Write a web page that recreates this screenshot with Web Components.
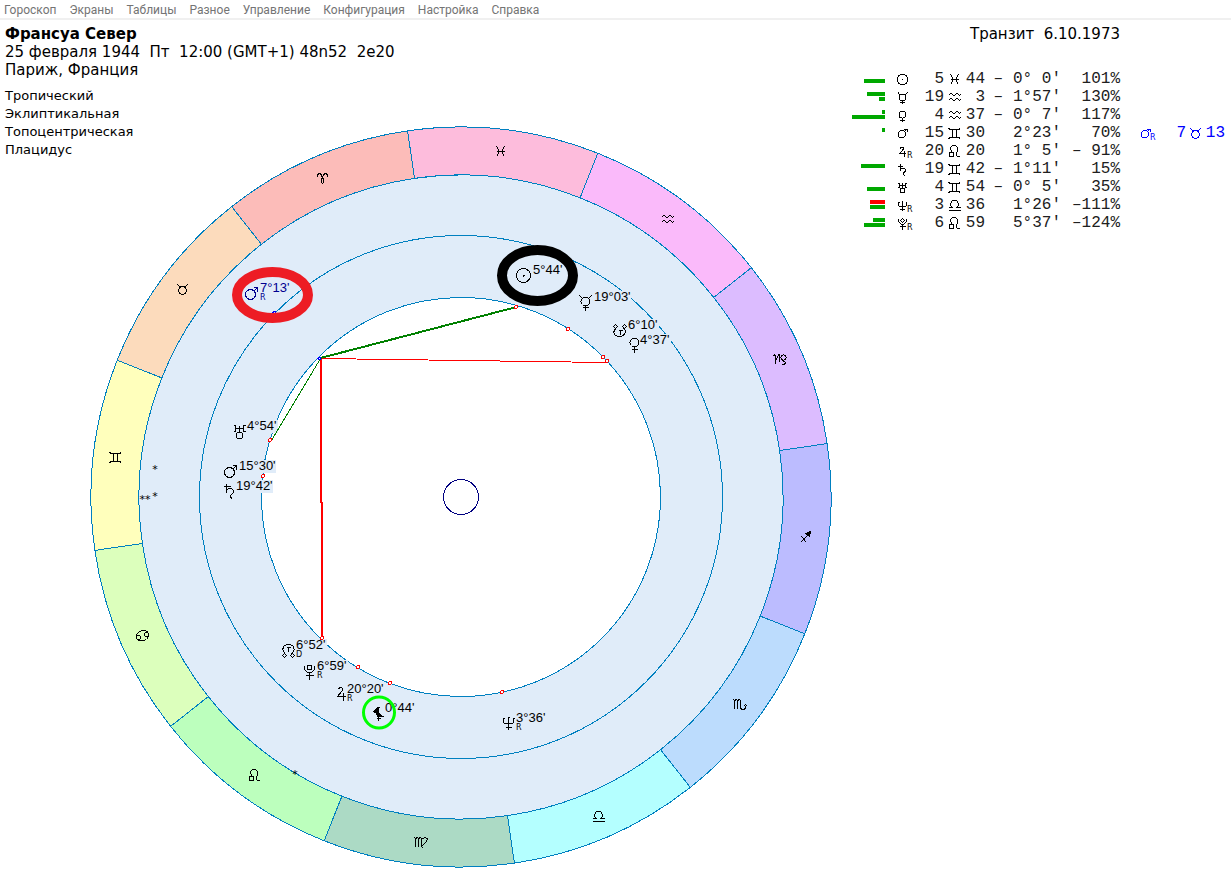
<!DOCTYPE html>
<html lang="ru">
<head>
<meta charset="utf-8">
<title>Франсуа Север</title>
<style>
  body { margin: 0; background: #fff; color: #000; font-family: "DejaVu Sans", Verdana, sans-serif; }
</style>
</head>
<body>
<astro-app>
  <app-menu slot="menu">
    <menu-item>Гороскоп</menu-item>
    <menu-item>Экраны</menu-item>
    <menu-item>Таблицы</menu-item>
    <menu-item>Разное</menu-item>
    <menu-item>Управление</menu-item>
    <menu-item>Конфигурация</menu-item>
    <menu-item>Настройка</menu-item>
    <menu-item>Справка</menu-item>
  </app-menu>
  <chart-info slot="info">
    <span slot="name">Франсуа Север</span>
    <span slot="date">25 февраля 1944  Пт  12:00 (GMT+1) 48n52  2e20</span>
    <span slot="place">Париж, Франция</span>
    <li>Тропический</li>
    <li>Эклиптикальная</li>
    <li>Топоцентрическая</li>
    <li>Плацидус</li>
  </chart-info>
  <zodiac-wheel slot="wheel"></zodiac-wheel>
  <transit-table slot="transit">Транзит  6.10.1973</transit-table>
</astro-app>

<script>
// Glyph outlines, drawn around (0,0) with one-pixel strokes.
const ring = (x, y, r) => `<circle cx="${x}" cy="${y}" r="${r}"/>`;
const line = d => `<path d="${d}"/>`;
const GLYPHS = {
  sun: ring(0, 0, 7) + line('M-1 0H1M0-1V1'),
  mercury: ring(0, 0, 4.5) + line('M-6-7V-6L-3-3M6-7V-6L3-3M0 4V9M-3 6H3'),
  venus: ring(0, -1, 4.5) + line('M0 3V9M-3 6H3'),
  mars: ring(-1, 1, 5) + line('M2-2L6-6M2-6H6V-2'),
  jupiter: line('M-3-4L-2-6H0L1-5V-3L-4 3H4M2-1V7'),
  saturn: line('M-3-7V2M-6-4H1M-3 0L-1-2H2L4 0V2L1 5V7L3 8'),
  uranus: line('M-6-6H-4V0H-6M6-6H4V0H6M-4-3H4M0-6V1') + ring(0, 4, 3.2),
  neptune: line('M-5-5V0L-4 1H4L5 0V-5M-6-4H-4M4-4H6M0-6V7M-3 5H3M-1-5H1'),
  pluto: ring(0, -4, 2.3) + line('M-5-6V-2L-2 1H2L5-2V-6M0 1V8M-4 4H4'),
  south: ring(-4, -4, 1.8) + ring(5, -4, 1.8) + line('M-3-2C-8 1-5 6 0 6S8 1 4-2M-1 0H3M1 0V4'),
  north: ring(-4, 5, 1.8) + ring(4, 5, 1.8) + line('M-3 3C-8-1-5-6 0-6S8-1 3 3M-2-3H2M0-3V1'),
  lilith: '<path fill="currentColor" stroke="none" d="M4-6H0L-3-4L-6-1L-3 1L-1 4H5L2 2L0 0V-3L1-5Z"/>' + line('M0 3V8M-2 6H2'),
  aries: line('M-5-2V-4L-3-5H-2L0-1L1-4L3-5L5-4V-2M-1-1V4L0 5L1 4V-1'),
  taurus: ring(0, 1, 3.8) + line('M-5-5L-3-3H3L5-5'),
  gemini: line('M-6-5L-4-4H4L6-5M-6 5L-4 4H4L6 5M-2-4V4M2-4V4'),
  cancer: ring(-4, 2, 2) + ring(4, -1, 2) + line('M-6 1V-1L-3-4L0-5H3L6-3M6 0V1L4 4L1 5H-3L-5 4'),
  leo: ring(-3, 3, 2.3) + line('M-2 1L-4-2V-4L-2-6H1L3-4V-1L2 2V4L3 5H5'),
  virgo: line('M-7-5L-6-4V4M-6-4L-4-5L-3-4V4M-3-4L-1-5L0-4V4L2 6M0-3L3-5L6-4L5-1L-1 5'),
  libra: line('M-6 5H6M-6 2H-2L-4 0V-2L-2-5H2L4-2V0L2 2H6'),
  scorpio: line('M-7-5L-6-4V4M-6-4L-4-5L-3-4V4M-3-4L-1-5L0-4V4L2 5H4L5 3V1M3 2L5 0L7 2'),
  sagittarius: line('M-5 5L4-4M-5-1H-4L1 5') + '<path fill="currentColor" d="M0-4L5-6L4-1Z"/>',
  capricorn: line('M-7-3L-6-5L-5-4V4M-5 2L-2-5H-1V2') + ring(3, -2, 2.6) + line('M2 1L5 3L4 5H1'),
  aquarius: line('M-6-2L-4-4H-3L-1-2H0L2-4H3L5-2L6-3M-6 3L-4 1H-3L-1 3H0L2 1H3L5 3L6 2'),
  pisces: line('M-4-5L-2-2V2L-4 5M4-5L2-2V2L4 5M-4 0H4')
};

function define(name, html, setup) {
  const template = document.createElement('template');
  template.innerHTML = html;
  customElements.define(name, class extends HTMLElement {
    constructor() {
      super();
      const root = this.attachShadow({ mode: 'open' });
      root.append(template.content.cloneNode(true));
      if (setup) setup(root, this);
    }
  });
}

define('astro-app', `
  <style>
    :host { display: block; }
    main { display: grid; grid-template-columns: minmax(0, 1fr) auto; align-items: start; }
    .info { grid-area: 1 / 1; z-index: 1; padding: 5px 0 0 5px; justify-self: start; }
    .wheel { grid-area: 1 / 1; padding: 106px 16px 9px 90px; }
    .transit { grid-area: 1 / 2; padding-top: 5px; }
  </style>
  <slot name="menu"></slot>
  <main>
    <div class="info"><slot name="info"></slot></div>
    <div class="wheel"><slot name="wheel"></slot></div>
    <div class="transit"><slot name="transit"></slot></div>
  </main>`);

define('app-menu', `
  <style>
    :host { display: block; border-bottom: 2px solid #f0f0f0; }
    nav { display: flex; height: 18px; padding-left: 4px; gap: 13px; align-items: flex-end; }
  </style>
  <nav><slot></slot></nav>`);

define('menu-item', `
  <style>
    :host { display: block; }
    button { display: block; margin: 0; padding: 0; border: 0; background: none; color: #747474;
      font: 12px/16px Roboto, "Noto Sans", sans-serif; white-space: nowrap; }
  </style>
  <button type="button"><slot></slot></button>`);

define('chart-info', `
  <style>
    :host { display: block; font-size: 15px; line-height: 18px; }
    h1, p { margin: 0; font-size: 15px; white-space: pre; }
    ul { margin: 8px 0 0; padding: 0; list-style: none; font-size: 13px; }
  </style>
  <h1><slot name="name"></slot></h1>
  <p><slot name="date"></slot></p>
  <p><slot name="place"></slot></p>
  <ul><slot></slot></ul>`);

define('astro-glyph', `
  <style>
    :host { display: block; white-space: normal; }
    svg { display: block; fill: none; stroke: currentColor; shape-rendering: crispEdges; overflow: visible; }
    path, circle { vector-effect: non-scaling-stroke; }
    text { fill: currentColor; stroke: none; font: 8px "DejaVu Sans", sans-serif; }
  </style>
  <svg width="18" height="18" viewBox="-6.5 -9.5 18 18" aria-hidden="true"></svg>`,
  (root, host) => {
    const scale = host.hasAttribute('small') ? 0.75 : 1;
    root.querySelector('svg').innerHTML =
      `<g transform="scale(${scale})">${GLYPHS[host.getAttribute('name')]}</g>` +
      (host.hasAttribute('retro') ? '<text x="4.5" y="6.5">R</text>' : '');
  });

define('zodiac-wheel', `
  <style>
    :host { display: block; }
    svg { display: block; width: 100%; height: auto; fill: none; stroke-width: 1; }
    .crisp { shape-rendering: crispEdges; }
    .edge { stroke: #0080c0; }
    .glyph { stroke: currentColor; }
    .label { font: 13px "Liberation Sans", Arial, sans-serif; fill: currentColor; }
    .mark { font: 8px "DejaVu Sans", sans-serif; fill: currentColor; }
    .star { font: 11px "DejaVu Sans", sans-serif; fill: #000; }
    .retro { color: #000090; }
  </style>
  <svg viewBox="89.5 125.5 742 742" role="img" aria-label="Зодиакальный круг"></svg>`,
  root => {
    const cx = 460.5, cy = 496.5;
    const at = (r, deg) => {
      const a = deg * Math.PI / 180;
      return `${(cx + r * Math.cos(a)).toFixed(2)} ${(cy - r * Math.sin(a)).toFixed(2)}`;
    };
    // Signs run counter-clockwise; each entry: glyph, fill, glyph centre.
    const signs = [
      ['aries', '#fcbcb9', 322, 178], ['taurus', '#fcdbbc', 182, 289], ['gemini', '#ffffbc', 115, 457],
      ['cancer', '#dcffbc', 142, 635], ['leo', '#bcffbd', 254, 775], ['virgo', '#acdac5', 421, 842],
      ['libra', '#b4ffff', 598, 816], ['scorpio', '#bcdcfd', 740, 704], ['sagittarius', '#bcbcff', 805, 537],
      ['capricorn', '#dcbcff', 780, 359], ['aquarius', '#fabafa', 667, 219], ['pisces', '#fdbcdc', 500, 151]
    ];
    // Planet glyph and centre, label with its left edge and baseline, optional motion mark.
    const bodies = [
      ['sun', 523, 275, '5°44\'', 533, 274], ['mercury', 585, 301, '19°03\'', 594, 301],
      ['south', 619, 330, '6°10\'', 628, 329], ['venus', 634, 343, '4°37\'', 640, 344],
      ['mars', 251, 293, '7°13\'', 260, 292, 'R', 'retro'], ['uranus', 239, 431, '4°54\'', 247, 430],
      ['mars', 230, 471, '15°30\'', 239, 470], ['saturn', 229, 490, '19°42\'', 236, 490],
      ['north', 288, 650, '6°52\'', 296, 649, 'D'], ['pluto', 309, 671, '6°59\'', 317, 670, 'R'],
      ['jupiter', 341, 693, '20°20\'', 347, 693, 'R'], ['lilith', 378, 712, '0°44\'', 385, 712],
      ['neptune', 508, 722, '3°36\'', 516, 722, 'R']
    ];
    const points = [[515, 306], [567, 328], [602, 356], [606, 360], [269, 439], [262, 475], [321, 637], [357, 666], [389, 682], [501, 691]];
    const stars = [[155, 468, '*'], [155, 495, '*'], [145, 498, '**'], [295, 773, '*']];

    let s = `<g class="crisp"><circle cx="${cx}" cy="${cy}" r="322" fill="#e0ecf9"/>`;
    signs.forEach(([, fill], i) => {
      const a = 98.3 + i * 30, b = a + 30;
      s += `<path class="edge" fill="${fill}" d="M${at(370, a)}A370 370 0 0 0 ${at(370, b)}L${at(322, b)}A322 322 0 0 1 ${at(322, a)}Z"/>`;
    });
    s += `<circle class="edge" cx="${cx}" cy="${cy}" r="261.5"/>
      <circle class="edge" fill="#fff" cx="${cx}" cy="${cy}" r="199.5"/>
      <circle stroke="#000080" cx="${cx}" cy="${cy}" r="17.5"/>`;
    bodies.forEach(b => { s += `<rect x="${b[4]}" y="${b[5] - 11}" width="${b[3].length * 6}" height="13" fill="#e0ecf9"/>`; });
    s += `<path stroke="#f00" d="M320 358L606 362"/>
      <path stroke="#f00" stroke-width="2" d="M320.5 358L321.5 636"/>
      <path stroke="#008000" stroke-width="2" d="M320 357.5L516 306.5"/>
      <path stroke="#008000" d="M320 358L271 440"/>
      <circle cx="319" cy="358" r="1.5" stroke="#00f" fill="#fff"/>
      <circle cx="274" cy="312" r="1.5" stroke="#00f"/>`;
    points.forEach(([x, y]) => { s += `<circle cx="${x}.5" cy="${y}.5" r="1.5" stroke="#f00" fill="#fff"/>`; });
    signs.forEach(([name, , x, y]) => { s += `<g class="glyph" transform="translate(${x} ${y})">${GLYPHS[name]}</g>`; });
    bodies.forEach(([name, x, y, , , , , cls]) => { s += `<g class="glyph ${cls || ''}" transform="translate(${x} ${y})">${GLYPHS[name]}</g>`; });
    s += '</g><g transform="translate(-.5 -.5)">';
    bodies.forEach(([, , , text, x, y, mark, cls]) => {
      s += `<g class="${cls || ''}"><text class="label" x="${x}" y="${y}">${text}</text>` +
        (mark ? `<text class="mark" x="${x}" y="${y + 8}">${mark}</text>` : '') + '</g>';
    });
    stars.forEach(([x, y, text]) => { s += `<text class="star" text-anchor="middle" x="${x}" y="${y + 5}">${text}</text>`; });
    s += `</g>
      <ellipse cx="272" cy="294.5" rx="35.5" ry="23" stroke="#ed1c24" stroke-width="10"/>
      <ellipse cx="537" cy="275" rx="35.5" ry="25.5" stroke="#000" stroke-width="10"/>
      <circle cx="378.5" cy="712" r="15.5" stroke="#0f0" stroke-width="3"/>`;
    root.querySelector('svg').innerHTML = s;
  });

define('transit-table', `
  <style>
    :host { display: block; }
    h2 { margin: 0; padding-right: 111px; font-size: 15px; font-weight: 400; line-height: 18px; text-align: right; white-space: pre; }
    table { margin-top: 27px; width: 383px; table-layout: fixed; border-collapse: collapse;
      font: 16px/18px "Liberation Mono", "Courier New", monospace; color: #202020; }
    td { padding: 0; height: 18px; text-align: right; white-space: pre; vertical-align: top; }
    .bars { display: flex; flex-direction: column; align-items: flex-end; gap: 1px; height: 14px; padding: 4px 1px 0 0; }
    .bars i { height: 4px; background: #00a800; }
    .bars .neg { background: #f00; }
    .planet { padding-left: 10px; color: #000; }
    .sign astro-glyph { margin-left: 4px; color: #000; }
    .retro { display: grid; grid-template-columns: 26px 21px 19px 20px; padding-left: 19px; color: #00f; }
    .retro .sign astro-glyph { margin-left: 3px; color: inherit; }
  </style>
  <h2><slot></slot></h2>
  <table>
    <colgroup><col style="width:38px"><col style="width:37px"><col style="width:21px"><col style="width:20px"><col style="width:21px"><col style="width:18px"><col style="width:58px"><col style="width:59px"><col style="width:111px"></colgroup>
    <tbody></tbody>
  </table>`,
  root => {
    // planet, retrograde, degree, sign, minute, sign of latitude, latitude, speed, upper bar, lower bar
    const rows = [
      ['sun', 0, '5', 'pisces', '44', '–', '0° 0\'', '101%', 0, 21],
      ['mercury', 0, '19', 'aquarius', '3', '–', '1°57\'', '130%', 18, 6],
      ['venus', 0, '4', 'aquarius', '37', '–', '0° 7\'', '117%', 3, 33],
      ['mars', 0, '15', 'gemini', '30', '', '2°23\'', '70%', 3, 0],
      ['jupiter', 1, '20', 'leo', '20', '', '1° 5\'', '– 91%', 0, 0],
      ['saturn', 0, '19', 'gemini', '42', '–', '1°11\'', '15%', 24, 0],
      ['uranus', 0, '4', 'gemini', '54', '–', '0° 5\'', '35%', 0, 18],
      ['neptune', 1, '3', 'libra', '36', '', '1°26\'', '–111%', -15, 15],
      ['pluto', 1, '6', 'leo', '59', '', '5°37\'', '–124%', 12, 21]
    ];
    const bar = n => `<i${n < 0 ? ' class="neg"' : ''} style="width:${Math.abs(n)}px"></i>`;
    root.querySelector('tbody').innerHTML = rows.map(r => `<tr>
      <td><div class="bars">${bar(r[8])}${bar(r[9])}</div></td>
      <td class="planet"><astro-glyph small name="${r[0]}"${r[1] ? ' retro' : ''}></astro-glyph></td>
      <td>${r[2]}</td><td class="sign"><astro-glyph name="${r[3]}"></astro-glyph></td><td>${r[4]}</td>
      <td>${r[5]}</td><td>${r[6]}</td><td>${r[7]}</td>
      <td>${r[0] === 'mars' ? `<div class="retro"><astro-glyph small retro name="mars"></astro-glyph><span>7</span><span class="sign"><astro-glyph name="taurus"></astro-glyph></span><span>13</span></div>` : ''}</td>
    </tr>`).join('');
  });
</script>
</body>
</html>
